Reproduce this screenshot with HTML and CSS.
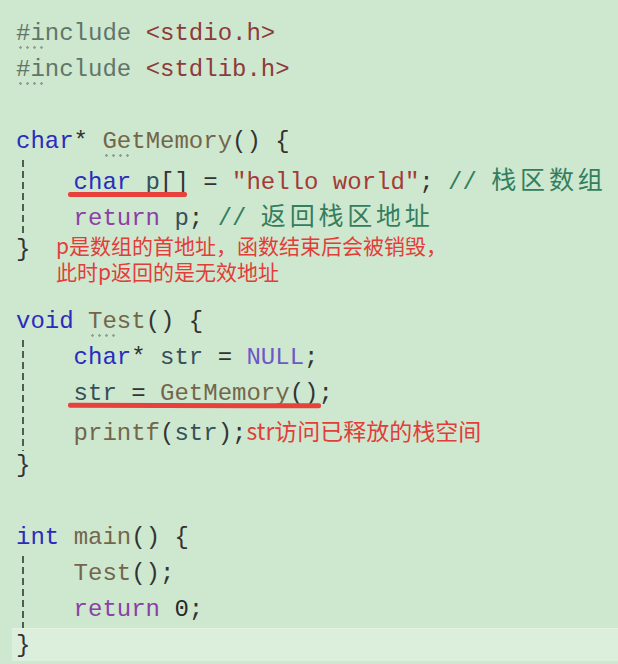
FILE: index.html
```html
<!DOCTYPE html>
<html lang="zh-CN">
<head>
<meta charset="utf-8">
<title>code</title>
<link rel="stylesheet" href="styles.css">
</head>
<body>
<div class="code">
  <div class="ln"><span class="pp">#include</span> <span class="hdr">&lt;stdio.h&gt;</span><span class="dots"></span></div>
  <div class="ln"><span class="pp">#include</span> <span class="hdr">&lt;stdlib.h&gt;</span><span class="dots"></span></div>
  <div class="ln"></div>
  <div class="ln"><span class="kw">char</span><span class="op">*</span> <span class="fn">GetMemory</span><span class="op">()</span> <span class="op">{</span><span class="dots d-get"></span></div>
  <div class="body">
    <div class="ln"><span class="mark m1"><span class="kw">char</span> <span class="var">p</span><span class="op">[]</span></span> <span class="op">=</span> <span class="str">"hello world"</span><span class="op">;</span> <span class="cm">// <span class="cjk">栈区数组</span></span></div>
    <div class="ln"><span class="ret">return</span> <span class="var">p</span><span class="op">;</span> <span class="cm">// <span class="cjk">返回栈区地址</span></span></div>
  </div>
  <div class="ln"><span class="op">}</span><span class="note">p是数组的首地址，函数结束后会被销毁，<br>此时p返回的是无效地址</span></div>
  <div class="ln"></div>
  <div class="ln"><span class="kw">void</span> <span class="fn">Test</span><span class="op">()</span> <span class="op">{</span><span class="dots d-test"></span></div>
  <div class="body">
    <div class="ln"><span class="kw">char</span><span class="op">*</span> <span class="var">str</span> <span class="op">=</span> <span class="null">NULL</span><span class="op">;</span></div>
    <div class="ln"><span class="mark m2"><span class="var">str</span> <span class="op">=</span> <span class="fn">GetMemory</span><span class="op">()</span></span><span class="op">;</span></div>
    <div class="ln"><span class="fn">printf</span><span class="op">(</span><span class="var">str</span><span class="op">);</span><span class="note-inline">str访问已释放的栈空间</span></div>
  </div>
  <div class="ln"><span class="op">}</span></div>
  <div class="ln"></div>
  <div class="ln"><span class="kw">int</span> <span class="fn">main</span><span class="op">()</span> <span class="op">{</span></div>
  <div class="body">
    <div class="ln"><span class="fn">Test</span><span class="op">();</span></div>
    <div class="ln"><span class="ret">return</span> <span class="num">0</span><span class="op">;</span></div>
  </div>
  <div class="ln current"><span class="op">}</span></div>
</div>
</body>
</html>
```
FILE: styles.css
```css
html, body {
  margin: 0;
  padding: 0;
  background: #cde8cf;
}
body {
  width: 618px;
  height: 664px;
  overflow: hidden;
}
.code {
  padding: 16px 0 0 16px;
  font-family: "Liberation Mono", "Noto Sans CJK SC", monospace;
  font-size: 24px;
  color: #2a2a2a;
}
.ln {
  position: relative;
  height: 36px;
  line-height: 36px;
  white-space: pre;
}
.body {
  position: relative;
  padding-left: 57.6px;
}
.body::before {
  content: "";
  position: absolute;
  left: 6px;
  top: 0;
  bottom: -3px;
  width: 1.5px;
  background: repeating-linear-gradient(to bottom, #4f5c50 0 7px, transparent 7px 11px);
}
.current {
  margin-left: -4px;
  padding-left: 4px;
  background: #dbefdc;
  border-top: 1px solid #e3f2e3;
  height: 32px;
  line-height: 33px;
}
.pp { color: #62756a; }
.hdr { color: #8e3a3a; }
.kw { color: #2b2bbd; }
.ret { color: #8a40a6; }
.fn { color: #74664a; }
.var { color: #35505a; }
.str { color: #a43a36; }
.cm { color: #347e60; }
.null { color: #6e58c8; }
.num { color: #2a2a2a; }
.op { color: #333; }
.cjk {
  font-family: "Noto Sans CJK SC", sans-serif;
  font-size: 25px;
  letter-spacing: 3.8px;
}
.dots {
  position: absolute;
  left: 1px;
  top: 30px;
  width: 27px;
  height: 3px;
  background-image: radial-gradient(circle, #8f9c92 1.1px, transparent 1.5px);
  background-size: 7px 3px;
}
.d-get { left: 87px; }
.d-test { left: 73px; }
.mark {
  position: relative;
  display: inline-block;
}
.mark::after {
  content: "";
  position: absolute;
  left: -6px;
  right: 2px;
  top: 27px;
  height: 5px;
  border-radius: 2px;
  background: #e8403a;
}
.m2::after {
  right: -2px;
  transform: rotate(0.15deg);
}
.note {
  position: absolute;
  left: 40px;
  top: 0;
  font-family: "Noto Sans CJK SC", sans-serif;
  font-size: 21px;
  line-height: 26px;
  color: #e33d3a;
  white-space: nowrap;
}
.note-inline {
  font-family: "Noto Sans CJK SC", sans-serif;
  font-size: 23px;
  color: #e33d3a;
}
```
